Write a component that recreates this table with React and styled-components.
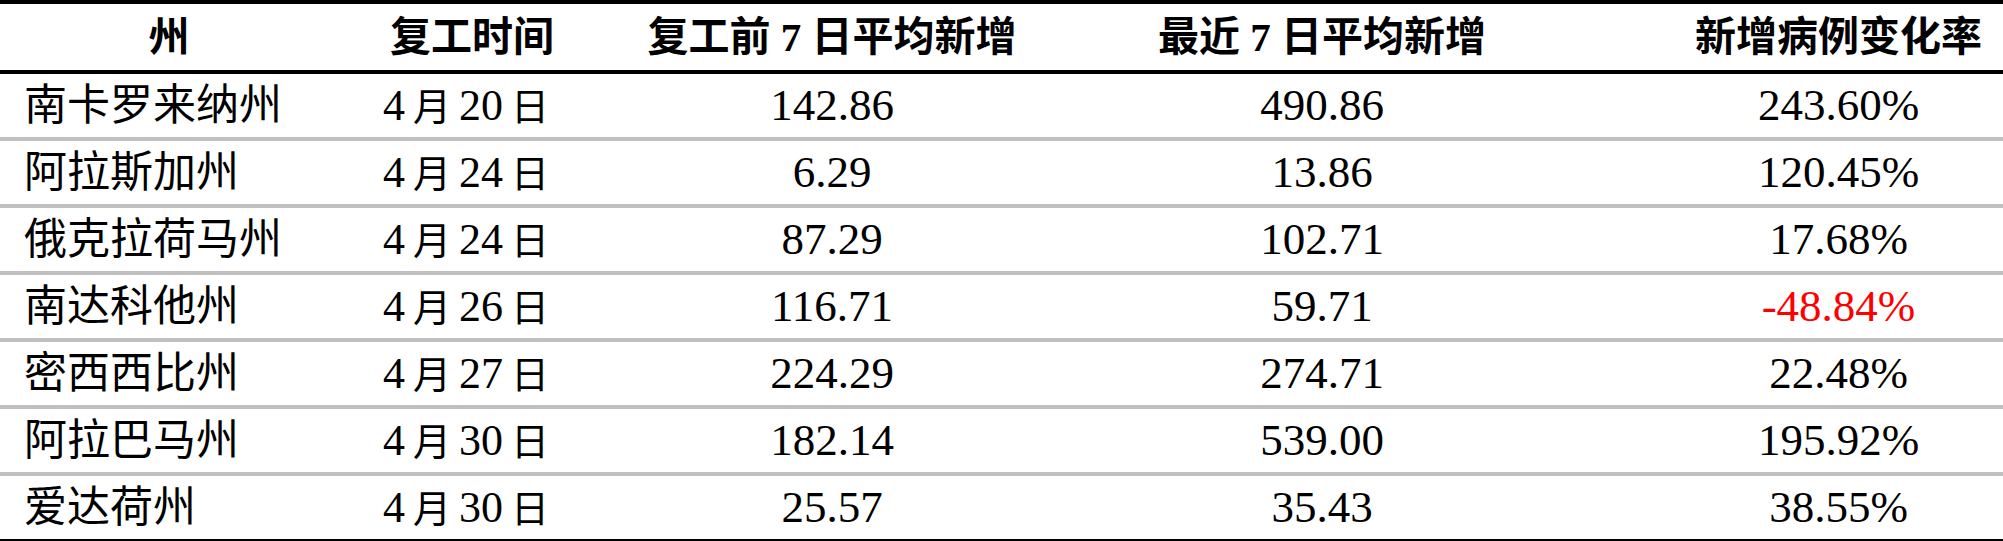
import React from 'react';
import styled, { createGlobalStyle } from 'styled-components';

const COLS = '338px 268px 452px 528px 1fr';

const Global = createGlobalStyle`
  html, body {
    margin: 0;
    padding: 0;
    background: #fff;
  }
`;

const Sheet = styled.div`
  width: 2003px;
  border-top: 4px solid #000;
  border-bottom: 2px solid #000;
  font-family: "Liberation Serif", "Noto Sans CJK SC", serif;
  color: #000;
`;

const HeadRow = styled.div`
  display: grid;
  grid-template-columns: ${COLS};
  height: 66px;
  align-items: center;
  border-bottom: 4px solid #000;
`;

const HeadCell = styled.div`
  text-align: center;
  font-weight: 700;
  font-size: 41px;
  line-height: 1;
  white-space: nowrap;
  padding-left: ${p => p.$shift || 0}px;
`;

const Row = styled.div`
  display: grid;
  grid-template-columns: ${COLS};
  height: 63px;
  align-items: center;

  & + & {
    border-top: 4px solid #c0c0c0;
  }
`;

const NameCell = styled.div`
  padding-left: 24px;
  font-size: 43px;
  line-height: 1;
  white-space: nowrap;
`;

const DateCell = styled.div`
  text-align: center;
  font-size: 44px;
  line-height: 1;
  white-space: nowrap;
  padding-right: 12px;
  word-spacing: -3px;
`;

const DateWord = styled.span`
  font-size: 38px;
`;

const NumCell = styled.div`
  text-align: center;
  font-size: 45px;
  line-height: 1;
  white-space: nowrap;
  padding-left: ${p => p.$shift || 0}px;
  color: ${p => (p.$neg ? '#ff0000' : '#000')};
`;

const rows = [
  ['南卡罗来纳州', 4, 20, '142.86', '490.86', '243.60%'],
  ['阿拉斯加州', 4, 24, '6.29', '13.86', '120.45%'],
  ['俄克拉荷马州', 4, 24, '87.29', '102.71', '17.68%'],
  ['南达科他州', 4, 26, '116.71', '59.71', '-48.84%'],
  ['密西西比州', 4, 27, '224.29', '274.71', '22.48%'],
  ['阿拉巴马州', 4, 30, '182.14', '539.00', '195.92%'],
  ['爱达荷州', 4, 30, '25.57', '35.43', '38.55%'],
];

export default function App() {
  return (
    <>
      <Global />
      <Sheet>
        <HeadRow>
          <HeadCell>州</HeadCell>
          <HeadCell>复工时间</HeadCell>
          <HeadCell>复工前 7 日平均新增</HeadCell>
          <HeadCell>最近 7 日平均新增</HeadCell>
          <HeadCell $shift={88}>新增病例变化率</HeadCell>
        </HeadRow>
        {rows.map(([name, month, day, before, recent, rate]) => (
          <Row key={name}>
            <NameCell>{name}</NameCell>
            <DateCell>
              {month} <DateWord>月</DateWord> {day} <DateWord>日</DateWord>
            </DateCell>
            <NumCell>{before}</NumCell>
            <NumCell>{recent}</NumCell>
            <NumCell $shift={88} $neg={rate.startsWith('-')}>{rate}</NumCell>
          </Row>
        ))}
      </Sheet>
    </>
  );
}
